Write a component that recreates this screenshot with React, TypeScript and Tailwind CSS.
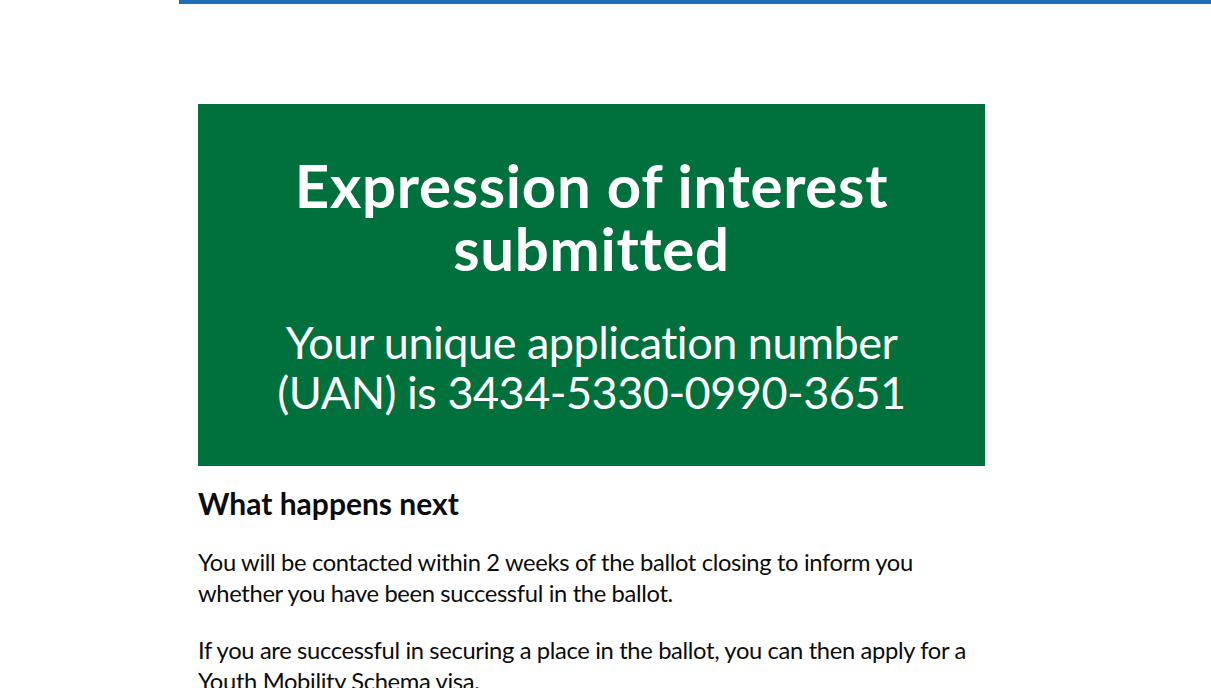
import React from 'react';

const App: React.FC = () => {
    return (
        <div className="min-h-screen bg-white text-[#0b0c0c] font-['Lato',_'Noto_Sans',_sans-serif] [font-variant-ligatures:none]">
            <div className="ml-[179px]">
                {/* Header rule */}
                <div className="h-[4px] bg-[#1d70b8]"></div>

                <main className="px-[19px] pt-[100px]">
                    <div className="w-[787px]">
                        {/* Confirmation panel */}
                        <div className="bg-[#00703c] text-white text-center px-[50px] pt-[50px] pb-[49px] mb-[19px]">
                            <h1 className="text-[60px] leading-[62.5px] font-bold tracking-[0.7px] mb-[37.5px]">
                                Expression of interest submitted
                            </h1>
                            <div className="text-[45px] leading-[50px] tracking-[-0.5px]">
                                Your unique application number (UAN) is 3434-5330-0990-3651
                            </div>
                        </div>

                        <h2 className="text-[30px] leading-[37.5px] font-bold mb-[25px]">What happens next</h2>
                        <p className="text-[23.75px] leading-[31.25px] tracking-[-0.35px] mb-[25px]">
                            You will be contacted within 2 weeks of the ballot closing to inform you whether you have been successful in the ballot.
                        </p>
                        <p className="text-[23.75px] leading-[31.25px] tracking-[-0.35px] mb-[25px]">
                            If you are successful in securing a place in the ballot, you can then apply for a Youth Mobility Schema visa.
                        </p>
                    </div>
                </main>
            </div>
        </div>
    );
};

export default App;
